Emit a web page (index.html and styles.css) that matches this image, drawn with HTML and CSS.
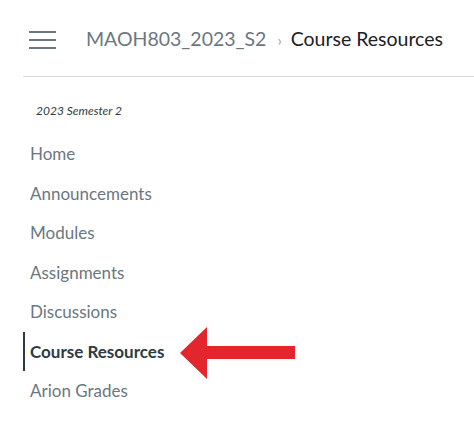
FILE: index.html
```html
<!DOCTYPE html>
<html lang="en">
<head>
  <meta charset="UTF-8">
  <meta name="viewport" content="width=device-width, initial-scale=1.0">
  <title>Course Resources</title>
  <link rel="stylesheet" href="styles.css">
</head>
<body>

  <div class="page">
    <header class="topbar">
      <button class="menu-btn" aria-label="Menu">
        <span></span><span></span><span></span>
      </button>
      <nav class="crumbs">
        <span class="crumb-course">MAOH803_2023_S2</span>
        <span class="crumb-sep">&#8250;</span>
        <span class="crumb-current">Course Resources</span>
      </nav>
    </header>

    <div class="course-nav">
      <p class="term">2023 Semester 2</p>
      <ul class="nav-list">
        <li><a href="#">Home</a></li>
        <li><a href="#">Announcements</a></li>
        <li><a href="#">Modules</a></li>
        <li><a href="#">Assignments</a></li>
        <li><a href="#">Discussions</a></li>
        <li class="active">
          <a href="#">Course Resources</a>
          <!-- annotation arrow -->
          <svg class="pointer" width="116" height="52" viewBox="0 0 116 52">
            <polygon points="0,26 27,0 27,19 115,19 115,32 27,32 27,52" fill="#e3262d"/>
          </svg>
        </li>
        <li><a href="#">Arion Grades</a></li>
      </ul>
    </div>
  </div>

</body>
</html>
```

FILE: styles.css
```css
body {
  margin: 0;
  font-family: 'Lato', 'Noto Sans', sans-serif;
  background-color: #fff;
  color: #2d3b45;
}

.page {
  margin-left: 23px;
}

.topbar {
  height: 76px;
  border-bottom: 1px solid #d6dadd;
  display: flex;
  align-items: center;
  padding-left: 6px;
}

.menu-btn {
  background: none;
  border: none;
  padding: 0;
  width: 27px;
  height: 18px;
  display: flex;
  flex-direction: column;
  justify-content: space-between;
  margin-top: 3px;
  cursor: pointer;
}

.menu-btn span {
  display: block;
  height: 2px;
  background-color: #6b7780;
}

.crumbs {
  margin-left: 30px;
  font-size: 19.5px;
  display: flex;
  align-items: baseline;
}

.crumb-course {
  color: #6b7780;
}

.crumb-sep {
  color: #9aa3a9;
  font-size: 15px;
  margin: 0 9px 0 11px;
}

.crumb-current {
  color: #1b2126;
}

.term {
  margin: 26px 0 0 13px;
  font-size: 12px;
  font-style: italic;
  color: #2d3b45;
}

.nav-list {
  list-style: none;
  margin: 16px 0 0;
  padding: 0;
}

.nav-list li {
  position: relative;
  border-left: 2px solid transparent;
  padding: 10px 5px;
  line-height: 19.5px;
}

.nav-list a {
  color: #6b7780;
  font-size: 17px;
  text-decoration: none;
}

.nav-list li.active {
  border-left-color: #2d3b45;
}

.nav-list li.active a {
  color: #2d3b45;
  font-weight: bold;
}

.pointer {
  position: absolute;
  left: 155px;
  top: -5px;
}
```
